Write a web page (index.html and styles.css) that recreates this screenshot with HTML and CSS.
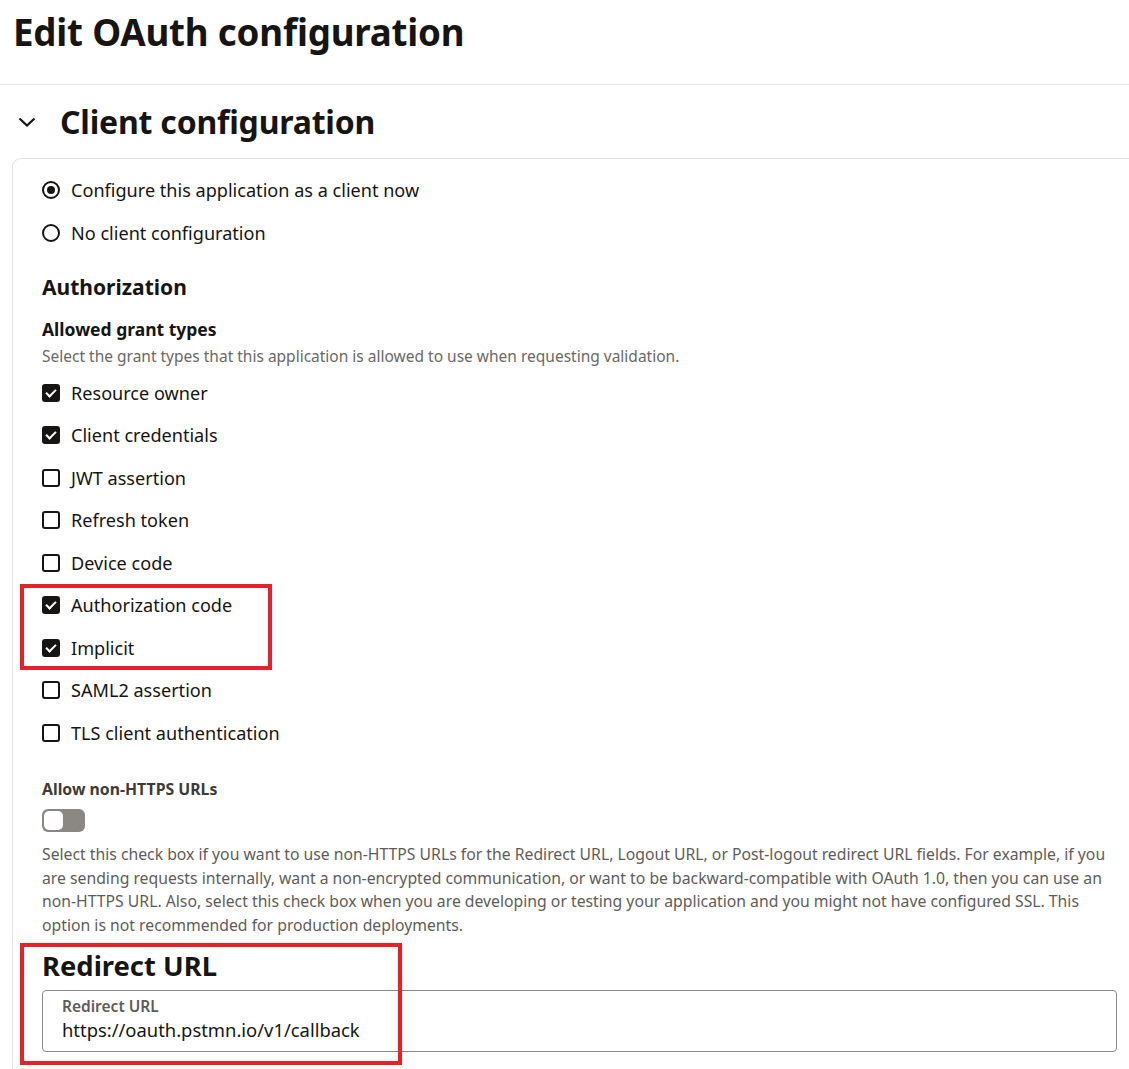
FILE: index.html
```html
<!DOCTYPE html>
<html lang="en">
<head>
<meta charset="utf-8">
<title>Edit OAuth configuration</title>
<link rel="stylesheet" href="styles.css">
</head>
<body>
<header class="page-header">
  <h1 class="page-title">Edit OAuth configuration</h1>
</header>
<section class="section">
  <div class="section-head">
    <svg class="chevron" width="18" height="10" viewBox="0 0 18 10"><path d="M1.5 1.5 L9 8.5 L16.5 1.5" fill="none" stroke="#161513" stroke-width="2.2"/></svg>
    <h2 class="section-title">Client configuration</h2>
  </div>
  <div class="card">
    <div class="row"><span class="radio checked"></span><span class="label">Configure this application as a client now</span></div>
    <div class="row"><span class="radio"></span><span class="label">No client configuration</span></div>

    <h3 class="sub-title">Authorization</h3>
    <h4 class="group-title">Allowed grant types</h4>
    <p class="help">Select the grant types that this application is allowed to use when requesting validation.</p>

    <div class="grants">
      <div class="row"><span class="checkbox checked"></span><span class="label">Resource owner</span></div>
      <div class="row"><span class="checkbox checked"></span><span class="label">Client credentials</span></div>
      <div class="row"><span class="checkbox"></span><span class="label">JWT assertion</span></div>
      <div class="row"><span class="checkbox"></span><span class="label">Refresh token</span></div>
      <div class="row"><span class="checkbox"></span><span class="label">Device code</span></div>
      <div class="highlight hl-grants">
        <div class="row"><span class="checkbox checked"></span><span class="label">Authorization code</span></div>
        <div class="row"><span class="checkbox checked"></span><span class="label">Implicit</span></div>
      </div>
      <div class="row"><span class="checkbox"></span><span class="label">SAML2 assertion</span></div>
      <div class="row"><span class="checkbox"></span><span class="label">TLS client authentication</span></div>
    </div>

    <div class="switch-label">Allow non-HTTPS URLs</div>
    <div class="switch"><span class="knob"></span></div>
    <p class="help long">Select this check box if you want to use non-HTTPS URLs for the Redirect URL, Logout URL, or Post-logout redirect URL fields. For example, if you are sending requests internally, want a non-encrypted communication, or want to be backward-compatible with OAuth 1.0, then you can use an non&#8209;HTTPS URL. Also, select this check box when you are developing or testing your application and you might not have configured SSL. This option is not recommended for production deployments.</p>

    <div class="highlight hl-redirect">
      <h3 class="redirect-title">Redirect URL</h3>
      <div class="field">
        <div class="field-label">Redirect URL</div>
        <div class="field-value">https://oauth.pstmn.io/v1/callback</div>
      </div>
    </div>
  </div>
</section>
</body>
</html>
```
FILE: styles.css
```css
html, body {
  margin: 0;
  padding: 0;
  background: #ffffff;
  color: #161513;
  font-family: "Noto Sans", "Open Sans", sans-serif;
}

.page-header {
  height: 85px;
  border-bottom: 1px solid #e4e2df;
  padding-left: 13px;
  box-sizing: border-box;
}

.page-title {
  margin: 0;
  padding-top: 6px;
  font-size: 36.7px;
  line-height: 52px;
  font-weight: 700;
  letter-spacing: -0.2px;
}

.section {
  padding-left: 12px;
}

.section-head {
  display: flex;
  align-items: center;
  height: 73px;
}

.chevron {
  margin-left: 6px;
  margin-right: 24px;
}

.section-title {
  margin: 0;
  font-size: 32px;
  line-height: 40px;
  font-weight: 700;
  letter-spacing: -0.2px;
}

.card {
  border-top: 1px solid #e4e2df;
  border-left: 1px solid #e4e2df;
  border-top-left-radius: 9px;
  padding: 10px 12px 0 29px;
  min-height: 920px;
}

.row {
  display: flex;
  align-items: center;
  height: 42.5px;
}

.label {
  font-size: 18.1px;
  margin-left: 11px;
  color: #161513;
}

.radio {
  width: 18px;
  height: 18px;
  box-sizing: border-box;
  border: 2px solid #161513;
  border-radius: 50%;
  display: flex;
  align-items: center;
  justify-content: center;
}

.radio.checked::after {
  content: "";
  width: 8px;
  height: 8px;
  border-radius: 50%;
  background: #161513;
}

.checkbox {
  width: 18px;
  height: 18px;
  box-sizing: border-box;
  border: 2px solid #161513;
  border-radius: 3px;
  position: relative;
}

.checkbox.checked {
  background: #161513;
}

.checkbox.checked::after {
  content: "";
  position: absolute;
  left: 4px;
  top: 1px;
  width: 4px;
  height: 8px;
  border-right: 2px solid #fff;
  border-bottom: 2px solid #fff;
  transform: rotate(45deg);
}

.sub-title {
  margin: 19px 0 0;
  font-size: 21px;
  line-height: 28px;
  font-weight: 700;
}

.group-title {
  margin: 16px 0 0;
  font-size: 17.5px;
  line-height: 24px;
  font-weight: 700;
}

.help {
  margin: 4px 0 0;
  font-size: 15.5px;
  line-height: 23.6px;
  color: #6a6866;
}

.grants {
  margin-top: 3px;
}

.help.long {
  margin-top: 11px;
  font-size: 15.75px;
  color: #5e5c5a;
}

.switch-label {
  margin-top: 24px;
  font-size: 15.8px;
  line-height: 22px;
  font-weight: 700;
  color: #3d3b39;
}

.switch {
  margin-top: 9px;
  width: 43px;
  height: 23px;
  box-sizing: border-box;
  background: #8b8782;
  border-radius: 6px;
  padding: 2px;
}

.knob {
  display: block;
  width: 19px;
  height: 19px;
  box-sizing: border-box;
  background: #ffffff;
  border-radius: 5px;
}

.highlight {
  position: relative;
}

.highlight::after {
  content: "";
  position: absolute;
  border: 4px solid #e8202a;
  pointer-events: none;
}

.hl-grants::after {
  top: 0;
  bottom: -1px;
  left: -22px;
  width: 244px;
}

.hl-redirect {
  padding-top: 6px;
  padding-bottom: 13px;
  margin-top: 6px;
}

.hl-redirect::after {
  top: 0;
  bottom: 0;
  left: -22px;
  width: 374px;
}

.redirect-title {
  margin: 0;
  font-size: 27.4px;
  line-height: 34px;
  font-weight: 700;
}

.field {
  margin-top: 7px;
  border: 1px solid #8c8a88;
  border-radius: 4px;
  height: 62px;
  box-sizing: border-box;
  padding: 5px 19px 0;
}

.field-label {
  font-size: 15.5px;
  line-height: 21px;
  font-weight: 600;
  color: #5e5c5a;
}

.field-value {
  font-size: 18.4px;
  line-height: 26px;
  color: #161513;
}
```
